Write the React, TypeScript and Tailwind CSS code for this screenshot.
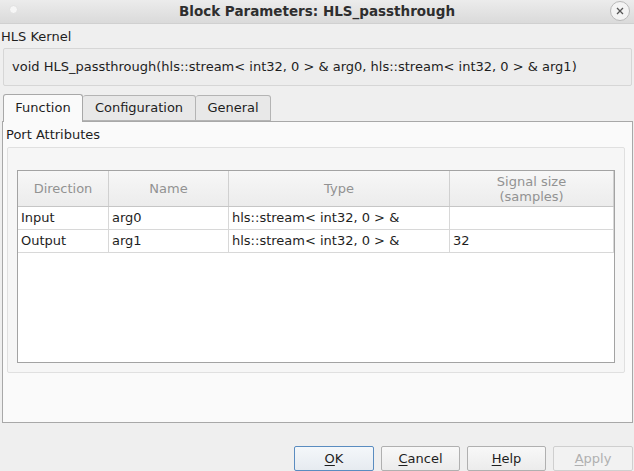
import React from "react";

const font = { fontFamily: '"DejaVu Sans", "Liberation Sans", sans-serif' };

export default function App() {
  return (
    <div
      className="w-[634px] h-[471px] bg-[#efefef] overflow-hidden flex flex-col text-[13px] text-[#1e1e1e]"
      style={font}
    >
      {/* title bar */}
      <div className="relative h-[24px] shrink-0 bg-gradient-to-b from-[#ececec] to-[#dadada] flex items-center justify-center border-b border-[#d0d0d0]">
        <div className="absolute left-[9px] top-[5px] w-[9px] h-[9px] rounded-full bg-[#f6f6f6] border border-[#e0e0e0]" />
        <span className="font-bold text-[13.5px] text-[#2e2e2e]">Block Parameters: HLS_passthrough</span>
        <div className="absolute right-[4px] top-[1px] w-[20px] h-[20px] rounded-full border border-[#b9b9b9] bg-[#f3f3f3] flex items-center justify-center">
          <svg width="8" height="8" viewBox="0 0 8 8">
            <path d="M1 1 L7 7 M7 1 L1 7" stroke="#555" strokeWidth="1.3" />
          </svg>
        </div>
      </div>

      <div className="pl-[1px] pt-[3px] h-[24px] leading-[20px]">HLS Kernel</div>
      <div className="ml-[3px] mr-[2px] h-[38px] border border-[#d6d6d6] rounded-[2px] bg-[#ededed] flex items-center pl-[8px]">
        <span>
          void HLS_passthrough(hls::stream&lt; int32, 0 &gt; &amp; arg0, hls::stream&lt; int32, 0 &gt; &amp; arg1)
        </span>
      </div>

      {/* tabs */}
      <div className="mt-[7px] flex items-end pl-[3px] h-[28px] relative z-10">
        <div className="w-[80px] h-[28px] border border-[#a8a8a8] border-b-0 rounded-t-[3px] bg-[#fafafa] flex items-center justify-center mb-[-1px] pb-[1px]">
          Function
        </div>
        <div className="w-[113px] h-[26px] border border-[#b4b4b4] border-l-0 rounded-t-[3px] bg-[#e8e8e8] flex items-center justify-center">
          Configuration
        </div>
        <div className="w-[75px] h-[26px] border border-[#b4b4b4] border-l-0 rounded-t-[3px] bg-[#e8e8e8] flex items-center justify-center">
          General
        </div>
      </div>
      <div className="ml-[2px] mr-[1px] h-[302px] border border-[#a8a8a8] bg-[#fafafa] flex flex-col">
        <div className="pl-[3px] pt-[4px] h-[25px] leading-[18px]">Port Attributes</div>
        <div className="ml-[4px] mr-[7px] h-[226px] border border-[#e0e0e0] rounded-[2px] bg-[#f6f6f6] pt-[22px] px-[9px]">
          <div className="h-[193px] border border-[#a3a3a3] bg-white flex flex-col">
            <div className="flex h-[36px] bg-gradient-to-b from-[#f7f7f7] to-[#ececec] border-b border-[#c6c6c6] text-[#929292]">
              <div className="w-[91px] border-r border-[#d0d0d0] flex items-center justify-center">Direction</div>
              <div className="w-[120px] border-r border-[#d0d0d0] flex items-center justify-center">Name</div>
              <div className="w-[221px] border-r border-[#d0d0d0] flex items-center justify-center">Type</div>
              <div className="flex-1 border-r border-[#d0d0d0] flex flex-col items-center justify-center leading-[15px]">
                <span>Signal size</span>
                <span>(samples)</span>
              </div>
            </div>
            {[
              ["Input", "arg0", "hls::stream< int32, 0 > &", ""],
              ["Output", "arg1", "hls::stream< int32, 0 > &", "32"],
            ].map((r, i) => (
              <div key={i} className="flex h-[23px] border-b border-[#d8d8d8]">
                <div className="w-[91px] border-r border-[#d8d8d8] pl-[3px] flex items-center">{r[0]}</div>
                <div className="w-[120px] border-r border-[#d8d8d8] pl-[3px] flex items-center">{r[1]}</div>
                <div className="w-[221px] border-r border-[#d8d8d8] pl-[3px] flex items-center">{r[2]}</div>
                <div className="flex-1 border-r border-[#d8d8d8] pl-[3px] flex items-center">{r[3]}</div>
              </div>
            ))}
          </div>
        </div>
      </div>

      {/* buttons */}
      <div className="mt-[23px] flex justify-end gap-[7px] pr-[1px]">
        <button className="w-[80px] h-[25px] border border-[#5a8cc0] rounded-[2px] bg-gradient-to-b from-[#f4f7fa] to-[#e6ebf0]">
          <span className="underline underline-offset-2">O</span>K
        </button>
        <button className="w-[79px] h-[25px] border border-[#b0b0b0] rounded-[2px] bg-gradient-to-b from-[#f8f8f8] to-[#ececec]">
          <span className="underline underline-offset-2">C</span>ancel
        </button>
        <button className="w-[79px] h-[25px] border border-[#b0b0b0] rounded-[2px] bg-gradient-to-b from-[#f8f8f8] to-[#ececec]">
          <span className="underline underline-offset-2">H</span>elp
        </button>
        <button className="w-[80px] h-[25px] border border-[#cfcfcf] rounded-[2px] bg-[#f2f2f2] text-[#b0b0b0]">
          <span className="underline underline-offset-2">A</span>pply
        </button>
      </div>
    </div>
  );
}
